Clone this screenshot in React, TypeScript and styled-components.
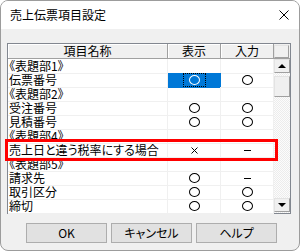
import React, { FC } from 'react'
import styled, { createGlobalStyle, css } from 'styled-components'

const GlobalStyle = createGlobalStyle`
  html, body {
    margin: 0;
    padding: 0;
    background: #fff;
  }
  body {
    font-family: 'Noto Sans CJK JP', 'Noto Sans', sans-serif;
    font-size: 12px;
    color: #000;
    font-feature-settings: 'palt';
  }
`

const COLS = '160px 53px 53px'

const Window = styled.div`
  width: 300px;
  height: 251px;
  box-sizing: border-box;
  border: 1px solid #9c9c9c;
  border-radius: 8px;
  overflow: hidden;
  display: flex;
  flex-direction: column;
  background: #f0f0f0;
`

const TitleBar = styled.div`
  height: 28px;
  flex: none;
  background: #fff;
  display: flex;
  align-items: center;
  justify-content: space-between;
  padding: 0 10px 0 9px;
`

const Title = styled.span`
  font-size: 12px;
  line-height: 14px;
`

const Body = styled.div`
  flex: 1;
  display: flex;
  flex-direction: column;
  gap: 9px;
  padding: 14px 8px 7px 6px;
`

const Grid = styled.div`
  width: 284px;
  height: 171px;
  box-sizing: border-box;
  border: 1px solid #828790;
  background: #fff;
  display: flex;
`

const Table = styled.div`
  width: 266px;
  display: flex;
  flex-direction: column;
`

const HeaderRow = styled.div`
  display: grid;
  grid-template-columns: ${COLS};
  height: 15px;
`

const HeaderCell = styled.div`
  box-sizing: border-box;
  background: #f0f0f0;
  border-right: 1px solid #a0a0a0;
  border-bottom: 1px solid #a0a0a0;
  box-shadow: inset 1px 1px #fff;
  display: flex;
  align-items: center;
  justify-content: center;
  line-height: 14px;
`

const Row = styled.div<{ $marked?: boolean }>`
  display: grid;
  grid-template-columns: ${COLS};
  height: 14px;
  position: relative;
  ${(p) =>
    p.$marked &&
    css`
      z-index: 2;
      &::after {
        content: '';
        position: absolute;
        top: -4px;
        bottom: -4px;
        left: -3px;
        right: -4px;
        border: 3px solid #ff0000;
        pointer-events: none;
      }
    `}
`

const Cell = styled.div<{ $center?: boolean; $selected?: boolean }>`
  box-sizing: border-box;
  border-right: 1px solid #f0f0f0;
  border-bottom: 1px solid #f0f0f0;
  display: flex;
  align-items: center;
  justify-content: ${(p) => (p.$center ? 'center' : 'flex-start')};
  padding-left: ${(p) => (p.$center ? 0 : 1)}px;
  line-height: 14px;
  white-space: nowrap;
  ${(p) =>
    p.$selected &&
    css`
      background: #0078d7;
      border-color: #0078d7;
    `}
`

const Focus = styled.span`
  box-sizing: border-box;
  width: 23px;
  height: 14px;
  border: 1px dotted #000;
  display: flex;
  align-items: center;
  justify-content: center;
`

const Circle = styled.span<{ $light?: boolean }>`
  box-sizing: border-box;
  width: 11px;
  height: 10px;
  border-radius: 50%;
  border: 1px solid ${(p) => (p.$light ? '#fff' : '#000')};
`

const Dash = styled.span`
  width: 7px;
  height: 1px;
  background: #000;
`

const ScrollBar = styled.div`
  width: 16px;
  display: flex;
  flex-direction: column;
  background: repeating-conic-gradient(#fcfcfc 0 25%, #ececec 0 50%) 0 0 / 2px 2px;
`

const raised = css`
  box-sizing: border-box;
  background: #f0f0f0;
  border: 1px solid;
  border-color: #e3e3e3 #a0a0a0 #a0a0a0 #e3e3e3;
`

const ScrollCorner = styled.div`
  height: 15px;
  flex: none;
  background: #f0f0f0;
  border-bottom: 1px solid #a0a0a0;
  box-sizing: border-box;
  padding: 1px 1px 0 0;
  display: flex;
  &::before {
    content: '';
    flex: 1;
    ${raised}
  }
`

const ScrollButton = styled.div<{ $down?: boolean }>`
  ${raised}
  height: 14px;
  flex: none;
  display: flex;
  align-items: center;
  justify-content: center;
  margin-bottom: ${(p) => (p.$down ? 1 : 0)}px;
  &::before {
    content: '';
    border-left: 4px solid transparent;
    border-right: 4px solid transparent;
    ${(p) => (p.$down ? 'border-top' : 'border-bottom')}: 4px solid #000;
  }
`

const Track = styled.div`
  flex: 1;
  padding-top: 3px;
`

const Thumb = styled.div`
  ${raised}
  height: 21px;
`

const ButtonRow = styled.div`
  display: flex;
  gap: 4px;
  padding-left: 19px;
`

const Button = styled.button`
  width: 81px;
  height: 20px;
  padding: 0;
  background: #e1e1e1;
  border: 1px solid #adadad;
  font-family: inherit;
  font-size: 12px;
  line-height: 14px;
  color: #000;
  font-feature-settings: 'palt';
`

type Mark = 'o' | 'x' | '-' | ''

type Item = {
  name: string
  show: Mark
  input: Mark
  selected?: boolean
  marked?: boolean
}

const items: Item[] = [
  { name: '《表題部1》', show: '', input: '' },
  { name: '伝票番号', show: 'o', input: 'o', selected: true },
  { name: '《表題部2》', show: '', input: '' },
  { name: '受注番号', show: 'o', input: 'o' },
  { name: '見積番号', show: 'o', input: 'o' },
  { name: '《表題部4》', show: '', input: '' },
  { name: '売上日と違う税率にする場合', show: 'x', input: '-', marked: true },
  { name: '《表題部5》', show: '', input: '' },
  { name: '請求先', show: 'o', input: '-' },
  { name: '取引区分', show: 'o', input: 'o' },
  { name: '締切', show: 'o', input: 'o' },
]

const MarkIcon: FC<{ mark: Mark; light?: boolean }> = ({ mark, light }) => {
  if (mark === 'o') return <Circle $light={light} />
  if (mark === '-') return <Dash />
  if (mark === 'x')
    return (
      <svg width="7" height="7" viewBox="0 0 7 7">
        <path d="M0.5 0.5L6.5 6.5M6.5 0.5L0.5 6.5" stroke="#000" strokeWidth="1" fill="none" />
      </svg>
    )
  return null
}

const App: FC = () => {
  return (
    <>
      <GlobalStyle />
      <Window>
        <TitleBar>
          <Title>売上伝票項目設定</Title>
          <svg width="10" height="10" viewBox="0 0 10 10">
            <path d="M0.5 0.5L9.5 9.5M9.5 0.5L0.5 9.5" stroke="#000" strokeWidth="1" fill="none" />
          </svg>
        </TitleBar>
        <Body>
          <Grid>
            <Table>
              <HeaderRow>
                <HeaderCell>項目名称</HeaderCell>
                <HeaderCell>表示</HeaderCell>
                <HeaderCell>入力</HeaderCell>
              </HeaderRow>
              {items.map((it) => (
                <Row key={it.name} $marked={it.marked}>
                  <Cell>{it.name}</Cell>
                  <Cell $center $selected={it.selected}>
                    {it.selected ? (
                      <Focus>
                        <MarkIcon mark={it.show} light />
                      </Focus>
                    ) : (
                      <MarkIcon mark={it.show} />
                    )}
                  </Cell>
                  <Cell $center>
                    <MarkIcon mark={it.input} />
                  </Cell>
                </Row>
              ))}
            </Table>
            <ScrollBar>
              <ScrollCorner />
              <ScrollButton />
              <Track>
                <Thumb />
              </Track>
              <ScrollButton $down />
            </ScrollBar>
          </Grid>
          <ButtonRow>
            <Button>OK</Button>
            <Button>キャンセル</Button>
            <Button>ヘルプ</Button>
          </ButtonRow>
        </Body>
      </Window>
    </>
  )
}

export default App
